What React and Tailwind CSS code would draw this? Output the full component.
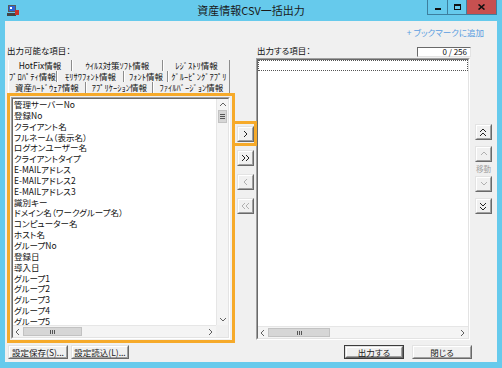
import React from 'react'

const items = [
  '管理サーバーNo', '登録No', 'クライアント名', 'フルネーム（表示名）', 'ログオンユーザー名', 'クライアントタイプ',
  'E-MAILアドレス', 'E-MAILアドレス2', 'E-MAILアドレス3', '識別キー', 'ドメイン名（ワークグループ名）',
  'コンピューター名', 'ホスト名', 'グループNo', '登録日', '導入日', 'グループ1', 'グループ2', 'グループ3', 'グループ4', 'グループ5',
]

const tabRows = [
  [{ t: 'HotFix情報', w: 'w-[64px]' }, { t: 'ｳｲﾙｽ対策ｿﾌﾄ情報', w: 'w-[91px]' }, { t: 'ﾚｼﾞｽﾄﾘ情報', w: 'w-[67px]' }],
  [{ t: 'ﾌﾟﾛﾊﾟﾃｨ情報', w: 'w-[49px]' }, { t: 'ﾓﾘｻﾜﾌｫﾝﾄ情報', w: 'w-[67px]' }, { t: 'ﾌｫﾝﾄ情報', w: 'w-[44px]' }, { t: 'ｸﾞﾙｰﾋﾟﾝｸﾞｱﾌﾟﾘ', w: 'w-[62px]' }],
  [{ t: '資産ﾊｰﾄﾞｳｪｱ情報', w: 'w-[78px]' }, { t: 'ｱﾌﾟﾘｹｰｼｮﾝ情報', w: 'w-[67px]' }, { t: 'ﾌｧｲﾙﾊﾞｰｼﾞｮﾝ情報', w: 'w-[77px]' }],
]

const chevPts = {
  up: '1,5 4,2 7,5',
  down: '1,2 4,5 7,2',
  left: '5,1 2,4 5,7',
  right: '2,1 5,4 2,7',
}

function Chev({ d, c = '#606060' }) {
  return (
    <svg width="8" height="8" viewBox="0 0 8 8">
      <polyline points={chevPts[d]} fill="none" stroke={c} strokeWidth="1" />
    </svg>
  )
}

// double chevrons for the move buttons
function Double({ d, c }) {
  const p = {
    right: ['1,1 4,4 1,7', '5,1 8,4 5,7'],
    left: ['4,1 1,4 4,7', '8,1 5,4 8,7'],
    up: ['1,4 4,1 7,4', '1,8 4,5 7,8'],
    down: ['1,1 4,4 7,1', '1,5 4,8 7,5'],
  }[d]
  return (
    <svg width="9" height="9" viewBox="0 0 9 9">
      <polyline points={p[0]} fill="none" stroke={c} strokeWidth="1" />
      <polyline points={p[1]} fill="none" stroke={c} strokeWidth="1" />
    </svg>
  )
}

function Raised({ className = '', children, dim = false, def = false }) {
  return (
    <div className={`flex ${def ? 'border border-[#3c3c3c]' : ''} ${className}`}>
      <div className="flex flex-1 border border-t-[#e3e3e3] border-l-[#e3e3e3] border-r-[#696969] border-b-[#696969]">
        <div className={`flex flex-1 items-center justify-center border border-t-white border-l-white border-r-[#a0a0a0] border-b-[#a0a0a0] bg-[#f0f0f0] whitespace-nowrap ${dim ? 'text-[#a0a0a0]' : 'text-[#1a1a1a]'}`}>
          {children}
        </div>
      </div>
    </div>
  )
}

function Sunken({ className = '', children }) {
  return (
    <div className={`flex border border-t-[#a0a0a0] border-l-[#a0a0a0] border-r-white border-b-white ${className}`}>
      <div className="flex flex-1 flex-col min-h-0 min-w-0 border border-t-[#696969] border-l-[#696969] border-r-[#e3e3e3] border-b-[#e3e3e3] bg-white">
        {children}
      </div>
    </div>
  )
}

function HScroll({ thumb, className = '' }) {
  return (
    <div className={`flex h-[12px] bg-[#f4f4f4] border-t border-[#e6e6e6] ${className}`}>
      <div className="w-[10px] flex items-center justify-center"><Chev d="left" /></div>
      <div className={`${thumb} my-[1px] bg-[#d6d6d6] border border-[#c2c2c2] flex items-center justify-center gap-[1px]`}>
        <div className="w-px h-[4px] bg-[#555]" />
        <div className="w-px h-[4px] bg-[#555]" />
        <div className="w-px h-[4px] bg-[#555]" />
      </div>
      <div className="flex-1" />
      <div className="w-[11px] flex items-center justify-center"><Chev d="right" /></div>
    </div>
  )
}

function VScroll() {
  return (
    <div className="flex flex-col w-[12px] bg-[#f4f4f4] border-l border-[#e6e6e6]">
      <div className="h-[11px] flex items-center justify-center"><Chev d="up" /></div>
      <div className="h-[13px] mx-[1px] bg-[#d6d6d6] border border-[#c2c2c2] flex flex-col items-center justify-center gap-[1px]">
        <div className="h-px w-[5px] bg-[#555]" />
        <div className="h-px w-[5px] bg-[#555]" />
        <div className="h-px w-[5px] bg-[#555]" />
      </div>
      <div className="flex-1" />
      <div className="h-[11px] flex items-center justify-center"><Chev d="down" /></div>
    </div>
  )
}

function TitleBar() {
  return (
    <div className="h-[21px] grid grid-cols-[1fr_auto_1fr] items-center">
      <div className="pl-[7px] flex items-center">
        <svg width="12" height="13" viewBox="0 0 12 13">
          <rect x="1" y="1" width="8" height="7" fill="#5a5a5a" />
          <rect x="2" y="2" width="6" height="5" fill="#2d62d6" />
          <rect x="3" y="3" width="2" height="2" fill="#ffffff" />
          <rect x="0" y="9" width="9" height="3" fill="#444" />
          <rect x="8" y="6" width="4" height="5" fill="#c8322a" />
        </svg>
      </div>
      <div className="text-[11px] leading-none text-[#1a1a1a] [font-feature-settings:'palt']">資産情報CSV一括出力</div>
      <div className="flex justify-end self-start pr-[5px]">
        <div className="flex h-[15px] border border-t-0 border-[#3d7f9e]">
          <div className="w-[19px] flex items-center justify-center">
            <div className="w-[6px] h-[2px] bg-[#111] mt-[3px]" />
          </div>
          <div className="w-[19px] flex items-center justify-center border-l border-[#3d7f9e]">
            <div className="w-[7px] h-[6px] border border-t-2 border-[#111]" />
          </div>
          <div className="w-[30px] flex items-center justify-center border-l border-[#3d7f9e] bg-[#c75050]">
            <svg width="7" height="6" viewBox="0 0 7 6">
              <path d="M0.5 0.5 L6.5 5.5 M6.5 0.5 L0.5 5.5" stroke="#111" strokeWidth="1.6" />
            </svg>
          </div>
        </div>
      </div>
    </div>
  )
}

export default function App() {
  return (
    <div className="w-[502px] h-[368px] flex flex-col bg-[#66caec] font-['Noto_Sans_CJK_JP',sans-serif] text-[#111]">
      <TitleBar />
      <div className="flex-1 mx-[5px] mb-[6px] bg-[#f0f0f0] flex flex-col">
        <div className="h-[22px] flex items-center justify-end pr-[13px] text-[8.5px] text-[#5a9ee0] [font-feature-settings:'palt']">
          + ブックマークに追加
        </div>

        <div className="flex h-[300px]">
          {/* left: available items */}
          <div className="w-[230px] pl-[2px] flex flex-col">
            <div className="h-[14px] flex items-center text-[8.5px] [font-feature-settings:'palt']">出力可能な項目：</div>
            <div className="mt-[3px] ml-[1px] flex flex-col text-[8.5px] leading-none">
              {tabRows.map((row, i) => (
                <div key={i} className="flex h-[11px]">
                  {row.map((tab) => (
                    <div key={tab.t} className={`${tab.w} flex items-center justify-center border-l border-l-white border-r border-r-[#8c8c8c] whitespace-nowrap`}>
                      {tab.t}
                    </div>
                  ))}
                </div>
              ))}
            </div>
            <div className="h-[250px] border-[3px] border-[#f6aa2a] pl-px pr-[2px] py-px flex">
              <Sunken className="flex-1">
                <div className="flex flex-1 min-h-0">
                  <div className="flex-1 overflow-hidden pl-px text-[8.5px] leading-[10.85px] [font-feature-settings:'palt']">
                    {items.map((it) => (
                      <div key={it} className="h-[10.85px] whitespace-nowrap">{it}</div>
                    ))}
                  </div>
                  <VScroll />
                </div>
                <div className="flex">
                  <HScroll thumb="w-[59px]" className="flex-1" />
                  <div className="w-[12px] bg-[#f0f0f0]" />
                </div>
              </Sunken>
            </div>
          </div>

          {/* move buttons */}
          <div className="w-[21px] flex flex-col pt-[83px] gap-[8px]">
            <div className="relative ml-[2px] w-[17px] h-[16px]">
              <div className="absolute left-[-2px] top-[-5px] w-[22px] h-[25px] border-[3px] border-l-0 border-[#f6aa2a]" />
              <Raised className="w-[17px] h-[16px]"><Chev d="right" c="#222" /></Raised>
            </div>
            <Raised className="ml-[2px] w-[17px] h-[16px]"><Double d="right" c="#222" /></Raised>
            <Raised className="ml-[2px] w-[17px] h-[16px]" dim><Chev d="left" c="#b0b0b0" /></Raised>
            <Raised className="ml-[2px] w-[17px] h-[16px]" dim><Double d="left" c="#b0b0b0" /></Raised>
          </div>

          {/* right: output items */}
          <div className="w-[214px] flex flex-col">
            <div className="h-[15px] flex justify-between">
              <div className="flex items-center pl-px text-[8.5px] [font-feature-settings:'palt']">出力する項目：</div>
              <div className="mt-[4px] h-[10px] w-[54px] -mr-px bg-white border border-t-[#696969] border-l-[#696969] border-r-[#e3e3e3] border-b-[#e3e3e3] flex items-center justify-end pr-[3px] text-[8px] leading-none">
                0 / 256
              </div>
            </div>
            <Sunken className="h-[282px]">
              <div className="flex-1 min-h-0">
                <div className="h-[11px] border border-dotted border-[#555]" />
              </div>
              <HScroll thumb="w-[62px]" />
            </Sunken>
          </div>

          {/* order buttons */}
          <div className="w-[27px] pl-[5px] flex flex-col pt-[81px]">
            <Raised className="w-[17px] h-[16px]"><Double d="up" c="#222" /></Raised>
            <Raised className="mt-[6px] w-[17px] h-[16px]" dim><Chev d="up" c="#b0b0b0" /></Raised>
            <div className="h-[14px] w-[17px] flex items-center justify-center text-[7.5px] text-[#a0a0a0] whitespace-nowrap">移動</div>
            <Raised className="w-[17px] h-[16px]" dim><Chev d="down" c="#b0b0b0" /></Raised>
            <Raised className="mt-[6px] w-[17px] h-[16px]"><Double d="down" c="#222" /></Raised>
          </div>
        </div>

        <div className="flex justify-between pt-[2px] pl-[3px] pr-[25px] text-[8.5px] leading-none [font-feature-settings:'palt']">
          <div className="flex gap-[3px]">
            <Raised className="w-[60px] h-[14px]">設定保存(S)...</Raised>
            <Raised className="w-[58px] h-[14px]">設定読込(L)...</Raised>
          </div>
          <div className="flex gap-[8px]">
            <Raised className="w-[60px] h-[14px]" def>出力する</Raised>
            <Raised className="w-[60px] h-[14px]">閉じる</Raised>
          </div>
        </div>
      </div>
    </div>
  )
}
